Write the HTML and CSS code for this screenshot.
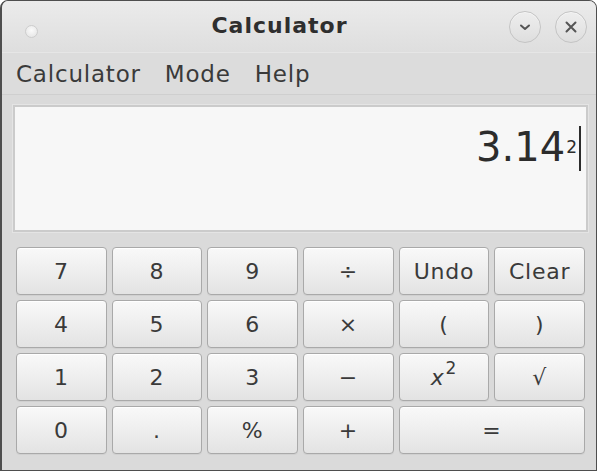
FILE: index.html
```html
<!DOCTYPE html>
<html>
<head>
<meta charset="utf-8">
<title>Calculator</title>
<link rel="stylesheet" href="styles.css">
</head>
<body>
<div class="window">
  <div class="titlebar">
    <span class="dot"></span>
    <span class="title">Calculator</span>
    <div class="controls">
      <span class="ctl">
        <svg width="14" height="14" viewBox="0 0 14 14"><path d="M3 5.5 L7 9 L11 5.5" fill="none" stroke="#555" stroke-width="2" stroke-linecap="round" stroke-linejoin="round"/></svg>
      </span>
      <span class="ctl">
        <svg width="14" height="14" viewBox="0 0 14 14"><path d="M2.5 2.5 L11.5 11.5 M11.5 2.5 L2.5 11.5" fill="none" stroke="#555" stroke-width="2" stroke-linecap="round"/></svg>
      </span>
    </div>
  </div>
  <div class="menubar">
    <span class="menu">Calculator</span>
    <span class="menu">Mode</span>
    <span class="menu">Help</span>
  </div>
  <div class="content">
    <div class="display">
      <span class="expr">3.14<span class="sup">2</span></span><span class="cursor"></span>
    </div>
    <div class="keys">
      <button class="key">7</button>
      <button class="key">8</button>
      <button class="key">9</button>
      <button class="key">÷</button>
      <button class="key">Undo</button>
      <button class="key">Clear</button>
      <button class="key">4</button>
      <button class="key">5</button>
      <button class="key">6</button>
      <button class="key">×</button>
      <button class="key">(</button>
      <button class="key">)</button>
      <button class="key">1</button>
      <button class="key">2</button>
      <button class="key">3</button>
      <button class="key">−</button>
      <button class="key"><i class="var">x</i><span class="ksup">2</span></button>
      <button class="key">√</button>
      <button class="key">0</button>
      <button class="key">.</button>
      <button class="key">%</button>
      <button class="key">+</button>
      <button class="key wide">=</button>
    </div>
  </div>
</div>
</body>
</html>
```

FILE: styles.css
```css
html, body {
  margin: 0;
  padding: 0;
  background: #ffffff;
}
body {
  width: 600px;
  height: 472px;
  overflow: hidden;
  font-family: "DejaVu Sans", sans-serif;
  color: #3a3a3a;
}
.window {
  box-sizing: border-box;
  width: 597px;
  height: 471px;
  border: 1px solid #4e4e4e;
  border-left-width: 2px;
  border-radius: 8px 8px 0 0;
  background: #dadada;
  display: flex;
  flex-direction: column;
  overflow: hidden;
}
.titlebar {
  height: 51px;
  flex: none;
  display: flex;
  align-items: center;
  background: linear-gradient(#ebebeb, #dedede);
  border-bottom: 1px solid #e6e6e6;
}
.dot {
  width: 11px;
  height: 11px;
  border-radius: 50%;
  margin-left: 23px;
  margin-top: 10px;
  background: radial-gradient(circle at 50% 40%, #fbfbfb, #e2e2e2);
  border: 1px solid #cdcdcd;
  flex: none;
}
.title {
  flex: 1;
  text-align: center;
  font-weight: bold;
  font-size: 22px;
  letter-spacing: 1px;
  color: #2e2e2e;
  padding-left: 12px;
  margin-top: -2px;
}
.controls {
  display: flex;
  gap: 14px;
  margin-right: 9px;
}
.ctl {
  box-sizing: border-box;
  width: 32px;
  height: 32px;
  border-radius: 50%;
  border: 1px solid #c4c4c4;
  background: linear-gradient(#eeeeee, #dedede);
  display: flex;
  align-items: center;
  justify-content: center;
  box-shadow: inset 0 1px 0 #f6f6f6;
}
.menubar {
  height: 41px;
  flex: none;
  display: flex;
  align-items: center;
  padding-left: 14px;
  gap: 24px;
  background: #dcdcdc;
  border-bottom: 1px solid #cfcfcf;
}
.menu {
  font-size: 23px;
  letter-spacing: 0.8px;
  color: #3a3a3a;
}
.content {
  flex: 1;
  padding: 10px 8px 0 11px;
  display: flex;
  flex-direction: column;
}
.display {
  box-sizing: border-box;
  height: 127px;
  border: 2px solid #cbcbcb;
  outline: 1px solid #e4e4e4;
  background: #f7f7f7;
  display: flex;
  justify-content: flex-end;
  align-items: flex-start;
  padding: 17px 5px 0 0;
}
.expr {
  font-size: 40px;
  line-height: 46px;
  color: #2c2c2c;
}
.sup {
  font-size: 17px;
  position: relative;
  top: -8px;
  margin-left: 1px;
}
.cursor {
  width: 2px;
  height: 45px;
  background: #2c2c2c;
  margin-left: 2px;
  margin-top: 2px;
}
.keys {
  margin: 15px 3px 0 3px;
  display: grid;
  grid-template-columns: repeat(6, 1fr);
  grid-auto-rows: 48px;
  gap: 5px;
}
.key {
  box-sizing: border-box;
  border: 1px solid #a9a9a9;
  border-radius: 4px;
  background: linear-gradient(#f9f9f9, #e3e3e3);
  box-shadow: inset 0 1px 0 #ffffff, 0 1px 0 #d0d0d0;
  font-family: "DejaVu Sans", sans-serif;
  font-size: 22px;
  letter-spacing: 0.8px;
  color: #3a3a3a;
  padding: 0;
  margin: 0;
  display: flex;
  align-items: center;
  justify-content: center;
}
.wide {
  grid-column: span 2;
}
.var {
  font-style: italic;
}
.ksup {
  font-size: 17px;
  position: relative;
  top: -9px;
  margin-left: 1px;
}
```
